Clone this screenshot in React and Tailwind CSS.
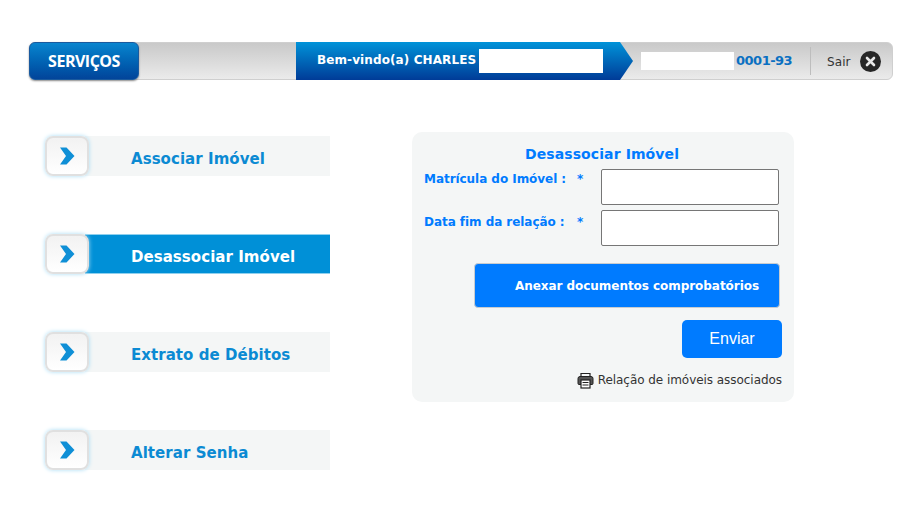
import React from "react";

const V = { fontFamily: '"DejaVu Sans", Verdana, sans-serif' };

function Chevron() {
  return (
    <svg width="17" height="18" viewBox="0 0 17 18">
      <path d="M1 0.5h6.5l8 8.5-8 8.5H1l6-8.5z" fill="#0f8fd6" />
    </svg>
  );
}

function MenuRow({ label, active }) {
  return (
    <div className="flex items-center h-10 relative">
      <div className="relative z-10 w-[44px] h-10 shrink-0 rounded-lg bg-gradient-to-b from-[#f2f2f2] to-white border-2 border-[#e0e0e0] shadow-[0_0_4px_#a8dcf4] flex items-center justify-center">
        <Chevron />
      </div>
      <div
        className={
          "-ml-[4px] w-[245px] h-10 flex items-center pl-[46px] pt-[7px] text-[15px] font-bold tracking-[0.05px] " +
          (active
            ? "bg-[#0090d7] text-white border-y border-[#8fd0ee]"
            : "bg-[#f4f6f6] text-[#0b8ad3]")
        }
        style={V}
      >
        {label}
      </div>
    </div>
  );
}

export default function App() {
  return (
    <div className="w-[924px] h-[513px] bg-white overflow-hidden pt-[42px]" style={V}>
      <header className="ml-[29px] w-[864px] h-[38px] flex rounded-md border border-[#cfcfcf] bg-gradient-to-b from-[#c9c9c9] to-[#ebebeb]">
        <div
          className="w-[110px] -my-px -ml-px shrink-0 h-[38px] rounded-md border border-[#1a5a9e] bg-gradient-to-b from-[#0a85cf] to-[#02449a] shadow-[0_1px_2px_#888] flex items-center justify-center text-white text-[16px] font-bold tracking-[-0.5px]"
          style={{ fontFamily: '"Open Sans", sans-serif' }}
        >
          SERVIÇOS
        </div>
        <div className="ml-[157px] w-[324px] -my-px h-[38px] shrink-0">
          <div className="w-[337px] h-[38px] flex items-center pl-[21px] pb-[3px] text-white text-[12px] font-bold tracking-[0.1px] bg-gradient-to-b from-[#0093d9] to-[#003b97] [clip-path:polygon(0_0,324px_0,337px_50%,324px_100%,0_100%)]">
            <span className="w-[162px] shrink-0 whitespace-nowrap">Bem-vindo(a) CHARLES</span>
            <span className="w-[124px] h-[24px] bg-white shrink-0 mt-[3px]" />
          </div>
        </div>
        <div className="ml-[21px] flex items-center flex-1 min-w-0">
          <span className="w-[93px] h-[18px] bg-white shrink-0" />
          <span className="ml-[2px] text-[13px] font-bold text-[#0a70c2] w-[74px] tracking-[-0.5px] whitespace-nowrap">0001-93</span>
          <span className="w-px h-[28px] bg-[#bdbdbd] shrink-0" />
          <span className="ml-4 text-[12px] text-[#333] tracking-[0.1px] pt-[2px]">Sair</span>
          <span className="ml-[9px] w-[21px] h-[21px] rounded-full bg-[#262626] flex items-center justify-center shrink-0">
            <svg width="11" height="11" viewBox="0 0 11 11">
              <path d="M2 2l7 7M9 2l-7 7" stroke="#e8e8e8" strokeWidth="2.6" strokeLinecap="round" />
            </svg>
          </span>
        </div>
      </header>

      <div className="flex mt-[52px] ml-[45px]">
        <nav className="w-[285px] shrink-0 flex flex-col gap-[58px] pt-1">
          <MenuRow label="Associar Imóvel" />
          <MenuRow label="Desassociar Imóvel" active />
          <MenuRow label="Extrato de Débitos" />
          <MenuRow label="Alterar Senha" />
        </nav>

        <section className="ml-[82px] w-[382px] h-[270px] rounded-[10px] bg-[#f4f6f6] flex flex-col items-center pt-[14px] shrink-0">
          <h1 className="text-[14px] leading-[17px] font-bold text-[#007bff] tracking-[0.1px] -ml-[2px]">Desassociar Imóvel</h1>
          <div className="w-full flex mt-[6px] pl-[12px] h-[36px]">
            <label className="w-[153px] text-[12px] leading-[17px] font-bold text-[#007bff] mt-[2px] tracking-[-0.05px] whitespace-nowrap">Matrícula do Imóvel :</label>
            <span className="w-[14px] text-[12px] leading-[17px] font-bold text-[#007bff] mt-[2px]">*</span>
            <div className="ml-[10px] w-[178px] h-[36px] bg-white border border-[#767676] rounded-[2px]" />
          </div>
          <div className="w-full flex mt-[5px] pl-[12px] h-[36px]">
            <label className="w-[153px] text-[12px] leading-[17px] font-bold text-[#007bff] mt-[4px] tracking-[-0.05px] whitespace-nowrap">Data fim da relação :</label>
            <span className="w-[14px] text-[12px] leading-[17px] font-bold text-[#007bff] mt-[4px]">*</span>
            <div className="ml-[10px] w-[178px] h-[36px] bg-white border border-[#767676] rounded-[2px]" />
          </div>
          <div className="self-start ml-[62px] mt-[17px] w-[306px] h-[45px] rounded-[4px] bg-[#007bff] border border-[#c8ccd0] flex items-center pl-[40px] text-white text-[12px] font-bold tracking-[-0.05px] whitespace-nowrap">
            Anexar documentos comprobatórios
          </div>
          <div
            className="self-end mr-[12px] mt-[12px] w-[100px] h-[38px] rounded-[5px] bg-[#007bff] text-white text-[16px] flex items-center justify-center"
            style={{ fontFamily: '"Liberation Sans", sans-serif' }}
          >
            Enviar
          </div>
          <div className="self-end mr-[12px] mt-[12px] flex items-center gap-[4px] text-[12px] text-[#333] tracking-[-0.05px] whitespace-nowrap">
            <svg width="17" height="17" viewBox="0 0 17 17" className="mt-[2px]">
              <path d="M4 5V1.5h9V5" fill="none" stroke="#222" strokeWidth="1.2" />
              <path d="M4 12.5H2a1 1 0 0 1-1-1V6.5a2 2 0 0 1 2-2h11a2 2 0 0 1 2 2v5a1 1 0 0 1-1 1h-2" fill="#555" stroke="#222" strokeWidth="1" />
              <rect x="4" y="8" width="9" height="8" fill="#fff" stroke="#222" strokeWidth="1.2" />
              <path d="M5.5 10.5h6M5.5 13h6" stroke="#222" strokeWidth="1" />
            </svg>
            <span>Relação de imóveis associados</span>
          </div>
        </section>
      </div>
    </div>
  );
}
